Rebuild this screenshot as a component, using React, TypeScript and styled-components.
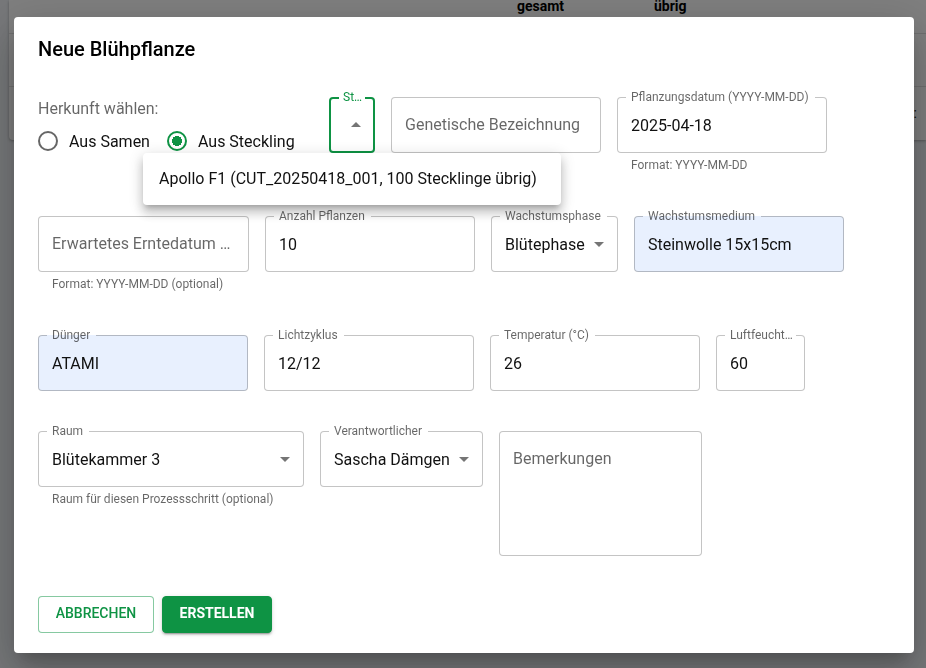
import React, { useId, useState } from "react";
import styled, { createGlobalStyle, css } from "styled-components";

const green = "#0e9344";
const textPrimary = "#111";
const textSecondary = "rgba(0, 0, 0, 0.6)";
const outline = "rgba(0, 0, 0, 0.23)";

const GlobalStyle = createGlobalStyle`
  *, *::before, *::after { box-sizing: border-box; }
  body {
    margin: 0;
    min-height: 100vh;
    background: #eef1f5;
    color: ${textPrimary};
    font-family: Roboto, "Liberation Sans", sans-serif;
    font-size: 16px;
    overflow: hidden;
  }
  input, select, textarea, button { font-family: inherit; }
`;

const Page = styled.main`
  height: 100vh;
  overflow: hidden;
  padding-left: 9px;
`;

const TableCard = styled.section`
  background: #fff;
  border-radius: 0 0 0 4px;
  box-shadow: 0 1px 3px rgba(0, 0, 0, 0.3);
`;

const PlantTable = styled.table`
  width: 100%;
  table-layout: fixed;
  border-collapse: collapse;
  font-size: 14px;

  th, td {
    padding: 0 9px 0 16px;
    border-bottom: 1px solid #e0e0e0;
    text-align: left;
  }
  th {
    padding-bottom: 20px;
    line-height: 13px;
    font-weight: 700;
    color: #000;
  }
  td {
    height: 53px;
    text-align: right;
  }
  tr:last-child td { border-bottom: 0; }
`;

const SpacerCol = styled.col`
  width: 492px;
`;

const CountCol = styled.col`
  width: 137px;
`;

const Backdrop = styled.div`
  position: fixed;
  inset: 0;
  padding: 17px 12px 15px 14px;
  background: rgba(0, 0, 0, 0.5);
  overflow: auto;
`;

const Dialog = styled.section`
  max-width: 900px;
  margin: 0 auto;
  border-radius: 4px;
  background: #fff;
  box-shadow:
    0 11px 15px -7px rgba(0, 0, 0, 0.2),
    0 24px 38px 3px rgba(0, 0, 0, 0.14),
    0 9px 46px 8px rgba(0, 0, 0, 0.12);
`;

const DialogTitle = styled.h2`
  margin: 0;
  padding: 16px 24px;
  font-size: 20px;
  line-height: 32px;
  font-weight: 500;
  color: #000;
`;

const Form = styled.form`
  display: flex;
  flex-wrap: wrap;
  align-items: flex-start;
  gap: 40px 16px;
  padding: 16px 24px 20px;
`;

const Field = styled.div<{ $width: number }>`
  position: relative;
  flex: 0 1 ${(p) => p.$width}px;
  min-width: 0;
`;

const Outline = styled.fieldset<{
  $notched?: boolean;
  $active?: boolean;
  $filled?: boolean;
}>`
  position: relative;
  min-width: 0;
  margin: ${(p) => (p.$notched ? "-7px 0 0" : "0")};
  padding: 0;
  border: 1px solid ${outline};
  border-radius: 4px;
  background: ${(p) => (p.$filled ? "#e8f0fe" : "#fff")};
  ${(p) => p.$active && css`border: 2px solid ${green};`}
`;

const Legend = styled.legend<{ $tight?: boolean; $active?: boolean }>`
  max-width: calc(100% - 16px);
  height: 15px;
  margin-left: 8px;
  padding: 0 ${(p) => (p.$tight ? 2 : 6)}px 0 ${(p) => (p.$active ? 4 : 5)}px;
  font-size: 12px;
  line-height: 15px;
  color: ${(p) => (p.$active ? green : textSecondary)};
`;

const LegendLabel = styled.label`
  display: block;
  overflow: hidden;
  text-overflow: ellipsis;
  white-space: nowrap;
`;

const controlText = css`
  display: block;
  width: 100%;
  margin: 0;
  border: 0;
  outline: 0;
  background: transparent;
  color: ${textPrimary};
  font-size: 16px;
  line-height: 24px;
`;

const TextInput = styled.input<{ $notched?: boolean }>`
  ${controlText}
  height: ${(p) => (p.$notched ? 47 : 54)}px;
  padding: ${(p) => (p.$notched ? "0 13px 7px" : "0 13px 2px")};
  text-overflow: ellipsis;
  &::placeholder { color: ${textSecondary}; opacity: 1; }
`;

const Select = styled.select`
  ${controlText}
  appearance: none;
  height: 47px;
  padding: 0 32px 5px 13px;
`;

const SelectTrigger = styled.button`
  ${controlText}
  height: 46px;
  cursor: pointer;
`;

const TextArea = styled.textarea`
  ${controlText}
  height: 123px;
  padding: 15px 13px;
  resize: none;
  &::placeholder { color: ${textSecondary}; opacity: 1; }
`;

const ArrowSvg = styled.svg<{ $open?: boolean }>`
  position: absolute;
  right: ${(p) => (p.$open ? 5 : 6)}px;
  bottom: ${(p) => (p.$open ? 14 : 15)}px;
  width: 24px;
  height: 24px;
  fill: rgba(0, 0, 0, 0.54);
  pointer-events: none;
`;

const HelperText = styled.p`
  margin: 2px 14px 1px;
  font-size: 12px;
  line-height: 20px;
  color: ${textSecondary};
  white-space: nowrap;
`;

const OriginGroup = styled.fieldset`
  flex: 0 0 275px;
  min-width: 0;
  margin: 0;
  padding: 0;
  border: 0;
`;

const OriginLegend = styled.legend`
  padding: 0;
  line-height: 23px;
  color: ${textSecondary};
`;

const RadioRow = styled.div`
  display: flex;
  gap: 17px;
`;

const RadioLabel = styled.label`
  display: flex;
  align-items: center;
  gap: 11px;
  height: 42px;
  white-space: nowrap;
`;

const Radio = styled.input`
  appearance: none;
  flex: none;
  width: 20px;
  height: 20px;
  margin: 0;
  border: 2px solid ${textSecondary};
  border-radius: 50%;

  &:checked {
    border-color: ${green};
    background: radial-gradient(circle, ${green} 5px, transparent 5px);
  }
`;

const Menu = styled.ul`
  position: absolute;
  z-index: 2;
  top: 56px;
  left: 50%;
  transform: translateX(-50%);
  min-width: 418px;
  margin: 0;
  padding: 8px 0;
  border-radius: 4px;
  background: #fff;
  list-style: none;
  box-shadow:
    0 5px 5px -3px rgba(0, 0, 0, 0.2),
    0 8px 10px 1px rgba(0, 0, 0, 0.14),
    0 3px 14px 2px rgba(0, 0, 0, 0.12);
`;

const MenuItem = styled.li`
  padding: 6px 16px;
  line-height: 24px;
  white-space: nowrap;
  cursor: pointer;
`;

const Actions = styled.div`
  display: flex;
  flex: 1 0 100%;
  gap: 8px;
`;

const Button = styled.button<{ $primary?: boolean }>`
  min-width: ${(p) => (p.$primary ? 110 : 116)}px;
  height: 37px;
  padding: 0 15px 3px;
  border: 1px solid ${(p) => (p.$primary ? green : "rgba(14, 147, 68, 0.5)")};
  border-radius: 4px;
  background: ${(p) => (p.$primary ? green : "#fff")};
  color: ${(p) => (p.$primary ? "#fff" : green)};
  font-size: 14px;
  font-weight: ${(p) => (p.$primary ? 700 : 500)};
  text-transform: uppercase;
  cursor: pointer;
  ${(p) =>
    p.$primary &&
    css`
      box-shadow:
        0 3px 1px -2px rgba(0, 0, 0, 0.2),
        0 2px 2px 0 rgba(0, 0, 0, 0.14),
        0 1px 5px 0 rgba(0, 0, 0, 0.12);
    `}
`;

function Arrow({ open }: { open?: boolean }) {
  return (
    <ArrowSvg viewBox="0 0 24 24" aria-hidden="true" $open={open}>
      <path d={open ? "M7 14l5-5 5 5z" : "M7 10l5 5 5-5z"} />
    </ArrowSvg>
  );
}

interface TextFieldProps {
  label: string;
  width: number;
  value?: string;
  helper?: string;
  filled?: boolean;
  tight?: boolean;
}

function TextField({ label, width, value, helper, filled, tight }: TextFieldProps) {
  const id = useId();
  const notched = value !== undefined;
  return (
    <Field $width={width}>
      <Outline $notched={notched} $filled={filled}>
        {notched && (
          <Legend $tight={tight}>
            <LegendLabel htmlFor={id}>{label}</LegendLabel>
          </Legend>
        )}
        <TextInput
          id={id}
          $notched={notched}
          defaultValue={value}
          placeholder={notched ? undefined : label}
          aria-label={notched ? undefined : label}
          aria-describedby={helper ? `${id}-help` : undefined}
        />
      </Outline>
      {helper && <HelperText id={`${id}-help`}>{helper}</HelperText>}
    </Field>
  );
}

interface SelectFieldProps {
  label: string;
  width: number;
  options: string[];
  helper?: string;
}

function SelectField({ label, width, options, helper }: SelectFieldProps) {
  const id = useId();
  return (
    <Field $width={width}>
      <Outline $notched>
        <Legend>
          <LegendLabel htmlFor={id}>{label}</LegendLabel>
        </Legend>
        <Select id={id} aria-describedby={helper ? `${id}-help` : undefined}>
          {options.map((option) => (
            <option key={option}>{option}</option>
          ))}
        </Select>
        <Arrow />
      </Outline>
      {helper && <HelperText id={`${id}-help`}>{helper}</HelperText>}
    </Field>
  );
}

function CuttingSelect() {
  const id = useId();
  const [open, setOpen] = useState(true);
  return (
    <Field $width={46}>
      <Outline $notched $active>
        <Legend $tight $active>
          <LegendLabel htmlFor={id}>Steckling</LegendLabel>
        </Legend>
        <SelectTrigger
          id={id}
          type="button"
          aria-haspopup="listbox"
          aria-expanded={open}
          onClick={() => setOpen(!open)}
        />
        <Arrow open={open} />
      </Outline>
      {open && (
        <Menu role="listbox" aria-label="Steckling">
          <MenuItem role="option" aria-selected={false} onClick={() => setOpen(false)}>
            Apollo F1 (CUT_20250418_001, 100 Stecklinge übrig)
          </MenuItem>
        </Menu>
      )}
    </Field>
  );
}

export default function App() {
  return (
    <>
      <GlobalStyle />
      <Page>
        <TableCard>
          <PlantTable>
            <colgroup>
              <SpacerCol />
              <CountCol />
              <CountCol />
              <col />
            </colgroup>
            <thead>
              <tr>
                <th />
                <th>gesamt</th>
                <th>übrig</th>
                <th />
              </tr>
            </thead>
            <tbody>
              <tr><td colSpan={4} /></tr>
              <tr><td colSpan={4}>:</td></tr>
            </tbody>
          </PlantTable>
        </TableCard>
      </Page>
      <Backdrop>
        <Dialog role="dialog" aria-modal="true" aria-labelledby="dialog-title">
          <DialogTitle id="dialog-title">Neue Blühpflanze</DialogTitle>
          <Form onSubmit={(event) => event.preventDefault()}>
            <OriginGroup>
              <OriginLegend>Herkunft wählen:</OriginLegend>
              <RadioRow>
                <RadioLabel>
                  <Radio type="radio" name="origin" value="seed" />
                  Aus Samen
                </RadioLabel>
                <RadioLabel>
                  <Radio type="radio" name="origin" value="cutting" defaultChecked />
                  Aus Steckling
                </RadioLabel>
              </RadioRow>
            </OriginGroup>
            <CuttingSelect />
            <TextField label="Genetische Bezeichnung" width={210} />
            <TextField
              label="Pflanzungsdatum (YYYY-MM-DD)"
              width={210}
              value="2025-04-18"
              helper="Format: YYYY-MM-DD"
            />
            <TextField
              label="Erwartetes Erntedatum (YYYY-MM-DD)"
              width={211}
              helper="Format: YYYY-MM-DD (optional)"
            />
            <TextField label="Anzahl Pflanzen" width={210} value="10" />
            <SelectField label="Wachstumsphase" width={127} options={["Blütephase"]} />
            <TextField label="Wachstumsmedium" width={210} value="Steinwolle 15x15cm" filled />
            <TextField label="Dünger" width={210} value="ATAMI" filled />
            <TextField label="Lichtzyklus" width={210} value="12/12" />
            <TextField label="Temperatur (°C)" width={210} value="26" />
            <TextField label="Luftfeuchtigkeit (%)" width={89} value="60" tight />
            <SelectField
              label="Raum"
              width={266}
              options={["Blütekammer 3"]}
              helper="Raum für diesen Prozessschritt (optional)"
            />
            <SelectField label="Verantwortlicher" width={163} options={["Sascha Dämgen"]} />
            <Field $width={203}>
              <Outline>
                <TextArea placeholder="Bemerkungen" aria-label="Bemerkungen" />
              </Outline>
            </Field>
            <Actions>
              <Button type="button">Abbrechen</Button>
              <Button type="submit" $primary>Erstellen</Button>
            </Actions>
          </Form>
        </Dialog>
      </Backdrop>
    </>
  );
}
